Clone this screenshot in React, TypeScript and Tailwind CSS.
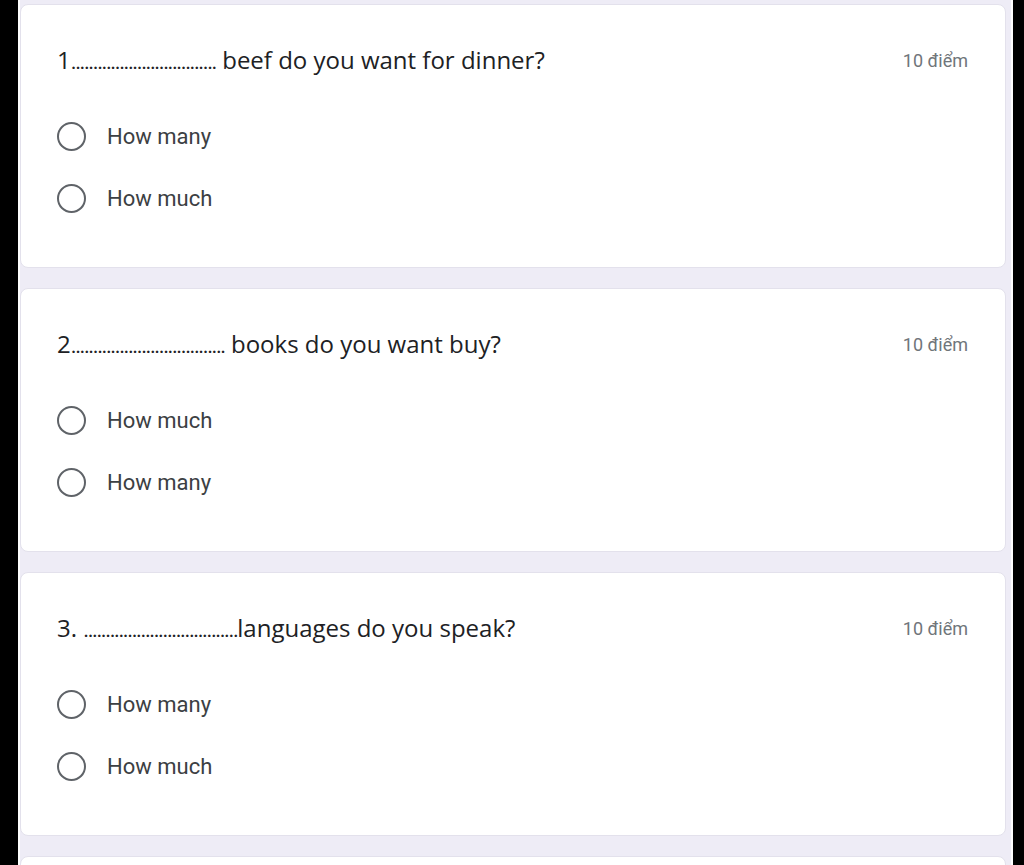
import React from 'react'

type Question = {
  lead: string
  dots: number
  rest: string
  options: string[]
}

const questions: Question[] = [
  { lead: '1', dots: 33, rest: ' beef do you want for dinner?', options: ['How many', 'How much'] },
  { lead: '2', dots: 35, rest: ' books do you want buy?', options: ['How much', 'How many'] },
  { lead: '3. ', dots: 35, rest: 'languages do you speak?', options: ['How many', 'How much'] },
]

function Radio({ label }: { label: string }) {
  return (
    <label className="flex h-[62px] items-center gap-[21px] cursor-pointer">
      <span className="h-[29px] w-[29px] shrink-0 rounded-full border-[2.5px] border-[#5f6368]" />
      <span className="text-[22px] text-[#3c4043]">{label}</span>
    </label>
  )
}

function QuestionCard({ q }: { q: Question }) {
  return (
    <div className="h-[264px] shrink-0 rounded-lg border border-[#e3e1ec] bg-white pl-[36px] pr-[37px] pt-[39px]">
      <div className="flex h-[32px] items-center justify-between">
        <p className="font-['Open_Sans','Liberation_Sans',sans-serif] text-[24px] text-[#202124]">
          {q.lead}
          <span className="font-['Roboto','Liberation_Sans',sans-serif] text-[22px] tracking-[-1.4px]">
            {'.'.repeat(q.dots)}
          </span>
          {q.rest}
        </p>
        <span className="text-[18px] text-[#70757a]">10 điểm</span>
      </div>
      <div className="mt-[29px] flex flex-col">
        {q.options.map((o) => (
          <Radio key={o} label={o} />
        ))}
      </div>
    </div>
  )
}

export default function App() {
  return (
    <div className="flex h-[865px] overflow-hidden bg-black font-['Roboto','Liberation_Sans',sans-serif]">
      <div className="w-[18px] shrink-0" />
      <div className="flex w-[995px] shrink-0 flex-col gap-[20px] border-x-2 border-white bg-[#eeecf6] pr-[5px] pt-[4px]">
        {questions.map((q, i) => (
          <QuestionCard key={i} q={q} />
        ))}
        <div className="h-[264px] shrink-0 rounded-lg border border-[#e3e1ec] bg-white" />
      </div>
    </div>
  )
}
